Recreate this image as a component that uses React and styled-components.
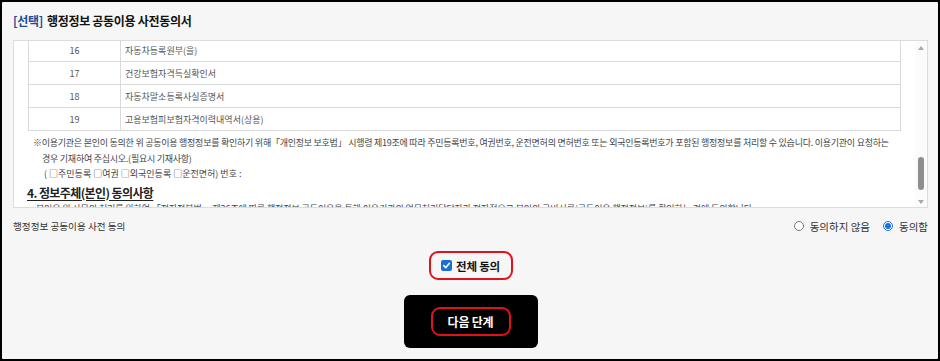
import React from "react";
import styled, { createGlobalStyle } from "styled-components";

const Global = createGlobalStyle`
  html, body { margin: 0; padding: 0; background: #000; }
  body { font-family: "Noto Sans CJK KR", "Noto Sans", sans-serif; }
  * { box-sizing: border-box; }
`;

const Frame = styled.div`
  width: 940px;
  height: 361px;
  border: 2px solid #000;
  border-radius: 3px;
  background: #f6f6f6;
  padding: 0 10px 0 11px;
  display: flex;
  flex-direction: column;
  overflow: hidden;
`;

const TitleBar = styled.h2`
  margin: 0;
  height: 38px;
  padding-bottom: 1px;
  display: flex;
  align-items: center;
  font-size: 12px;
  font-weight: 700;
  color: #111;
  letter-spacing: -0.3px;
`;

const Tag = styled.span`
  color: #1d4b9a;
  margin-right: 4px;
`;

const ScrollBox = styled.div`
  height: 168px;
  border: 1px solid #dcdcdc;
  background: #fff;
  display: flex;
`;

const Content = styled.div`
  flex: 1;
  overflow: hidden;
  padding: 0 14px 0 14px;
  color: #444;
`;

const Table = styled.table`
  width: 100%;
  border-collapse: collapse;
  margin-top: -3px;
  font-size: 9px;
  color: #555;
`;

const Row = styled.tr`
  height: 23px;
  border: 1px solid #dadada;
`;

const NumCell = styled.td`
  width: 92px;
  text-align: center;
  border-right: 1px solid #dadada;
  padding: 0;
`;

const NameCell = styled.td`
  padding: 0 0 0 4px;
`;

const Note = styled.p`
  margin: 4px 0 0 14px;
  text-indent: -9px;
  font-size: 9px;
  line-height: 15.5px;
  white-space: nowrap;
  letter-spacing: -0.25px;
  color: #444;
`;

const NoteLine = styled.p`
  margin: 0 0 0 16px;
  font-size: 9px;
  line-height: 15.5px;
  white-space: nowrap;
  color: #444;
`;

const Heading = styled.h3`
  margin: 2px 0 0 -1px;
  font-size: 12px;
  font-weight: 700;
  line-height: 18px;
  text-decoration: underline;
  text-underline-offset: 2px;
  letter-spacing: -0.6px;
  color: #222;
`;

const Bullet = styled.p`
  margin: -1px 0 0 3px;
  font-size: 9px;
  line-height: 15px;
  white-space: nowrap;
  letter-spacing: -0.1px;
  color: #444;
`;

const Scrollbar = styled.div`
  width: 12px;
  display: flex;
  flex-direction: column;
  align-items: center;
  padding: 5px 0 3px;
  background: #fbfbfb;
`;

const Arrow = styled.span`
  width: 0;
  height: 0;
  border-left: 3.5px solid transparent;
  border-right: 3.5px solid transparent;
  ${(p) =>
    p.$down
      ? "border-top: 4px solid #a8a8a8;"
      : "border-bottom: 4px solid #a8a8a8;"}
`;

const Thumb = styled.span`
  margin-top: auto;
  margin-bottom: 10px;
  width: 6px;
  height: 33px;
  border-radius: 3px;
  background: #8e8e8e;
`;

const AgreeRow = styled.div`
  height: 36px;
  display: flex;
  align-items: center;
  justify-content: space-between;
  color: #333;
`;

const AgreeLabel = styled.span`
  font-size: 9.6px;
`;

const RadioGroup = styled.div`
  display: flex;
  align-items: center;
  gap: 13px;
  font-size: 10.5px;
`;

const RadioLabel = styled.label`
  display: flex;
  align-items: center;
  gap: 6px;
`;

const RadioDot = styled.span`
  width: 10px;
  height: 10px;
  border-radius: 50%;
  border: 1px solid ${(p) => (p.$on ? "#1a73e8" : "#777")};
  background: #fff;
  display: flex;
  align-items: center;
  justify-content: center;
  &::after {
    content: "";
    width: 6px;
    height: 6px;
    border-radius: 50%;
    background: ${(p) => (p.$on ? "#1a73e8" : "transparent")};
  }
`;

const Center = styled.div`
  display: flex;
  flex-direction: column;
  align-items: center;
`;

const RedOutline = styled.div`
  width: ${(p) => p.$w}px;
  height: 29px;
  border: 2.5px solid #e2121b;
  border-radius: 9px;
  display: flex;
  align-items: center;
  justify-content: center;
  gap: 4px;
`;

const CheckWrap = styled.div`
  margin-top: 7px;
`;

const CheckBox = styled.span`
  width: 11px;
  height: 11px;
  border-radius: 2px;
  background: #1a6ed8;
  display: flex;
  align-items: center;
  justify-content: center;
`;

const CheckText = styled.span`
  font-size: 11.5px;
  font-weight: 700;
  color: #111;
  letter-spacing: -0.2px;
`;

const NextButton = styled.button`
  margin-top: 15px;
  width: 134px;
  height: 53px;
  border: none;
  border-radius: 6px;
  background: #000;
  display: flex;
  align-items: center;
  justify-content: center;
  padding: 0;
  cursor: pointer;
  font-family: inherit;
`;

const ButtonText = styled.span`
  font-size: 12px;
  font-weight: 700;
  color: #fff;
  letter-spacing: -0.2px;
`;

const rows = [
  ["16", "자동차등록원부(을)"],
  ["17", "건강보험자격득실확인서"],
  ["18", "자동차말소등록사실증명서"],
  ["19", "고용보험피보험자격이력내역서(상용)"],
];

export default function App() {
  return (
    <>
      <Global />
      <Frame>
        <TitleBar>
          <Tag>[선택]</Tag>행정정보 공동이용 사전동의서
        </TitleBar>
        <ScrollBox>
          <Content>
            <Table>
              <tbody>
                {rows.map(([n, name]) => (
                  <Row key={n}>
                    <NumCell>{n}</NumCell>
                    <NameCell>{name}</NameCell>
                  </Row>
                ))}
              </tbody>
            </Table>
            <Note>
              ※이용기관은 본인이 동의한 위 공동이용 행정정보를 확인하기 위해「개인정보 보호법」 시행령 제19조에 따라 주민등록번호, 여권번호, 운전면허의 면허번호 또는 외국인등록번호가 포함된 행정정보를 처리할 수 있습니다. 이용기관이 요청하는
              <br />
              경우 기재하여 주십시오.(필요시 기재사항)
            </Note>
            <NoteLine>( □주민등록 □여권 □외국인등록 □운전면허) 번호 :</NoteLine>
            <Heading>4. 정보주체(본인) 동의사항</Heading>
            <Bullet>
              • 본인은 위 사무의 처리를 위하여 「전자정부법」 제36조에 따른 행정정보 공동이용을 통해 이용기관의 업무처리담당자가 전자적으로 본인의 구비서류(공동이용 행정정보)를 확인하는 것에 동의합니다.
            </Bullet>
          </Content>
          <Scrollbar>
            <Arrow />
            <Thumb />
            <Arrow $down />
          </Scrollbar>
        </ScrollBox>
        <AgreeRow>
          <AgreeLabel>행정정보 공동이용 사전 동의</AgreeLabel>
          <RadioGroup>
            <RadioLabel>
              <RadioDot />
              동의하지 않음
            </RadioLabel>
            <RadioLabel>
              <RadioDot $on />
              동의함
            </RadioLabel>
          </RadioGroup>
        </AgreeRow>
        <Center>
          <CheckWrap>
            <RedOutline $w={84}>
              <CheckBox>
                <svg width="9" height="9" viewBox="0 0 10 10">
                  <path d="M2 5.2 L4.2 7.4 L8.2 2.6" fill="none" stroke="#fff" strokeWidth="1.8" strokeLinecap="round" strokeLinejoin="round" />
                </svg>
              </CheckBox>
              <CheckText>전체 동의</CheckText>
            </RedOutline>
          </CheckWrap>
          <NextButton>
            <RedOutline $w={80}>
              <ButtonText>다음 단계</ButtonText>
            </RedOutline>
          </NextButton>
        </Center>
      </Frame>
    </>
  );
}
